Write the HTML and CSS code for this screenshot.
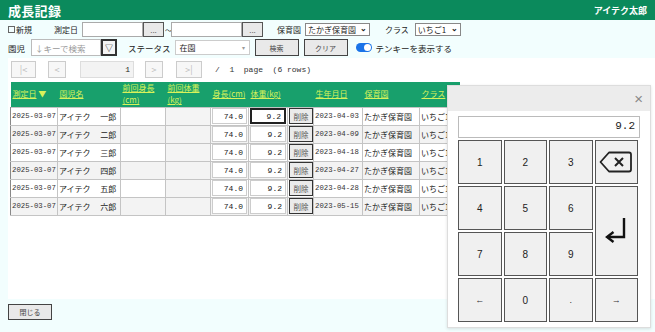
FILE: index.html
```html
<!DOCTYPE html>
<html lang="ja">
<head>
    <meta charset="UTF-8">
    <meta name="viewport" content="width=device-width, initial-scale=1.0">
    <title>成長記録</title>
    <link rel="stylesheet" href="styles.css">
</head>
<body>
    <header class="topbar">
        <h1>成長記録</h1>
        <span class="user">アイテク太郎</span>
    </header>

    <div class="filters">
        <div class="frow row1">
            <label class="chk"><span class="box"></span>新規</label>
            <span class="lbl lbl-date">測定日</span>
            <span class="date-box"><input type="text" class="date-in"><button class="dots">...</button></span>
            <span class="tilde">〜</span>
            <span class="date-box date-box2"><input type="text" class="date-in date-in2"><button class="dots">...</button></span>
            <span class="lbl lbl-en">保育園</span>
            <span class="sel sel-en">たかぎ保育園<span class="chev">⌄</span></span>
            <span class="lbl lbl-cls">クラス</span>
            <span class="sel sel-cls">いちご1<span class="chev">⌄</span></span>
        </div>
        <div class="frow row2">
            <span class="lbl">園児</span>
            <span class="kid-box"><input type="text" class="kid-in" placeholder="↓キーで検索"><button class="tri">▽</button></span>
            <span class="lbl lbl-st">ステータス</span>
            <span class="status">在園<span class="caret">▾</span></span>
            <button class="btn btn-search">検索</button>
            <button class="btn btn-clear">クリア</button>
            <span class="toggle"><span class="knob"></span></span>
            <span class="lbl lbl-tenkey">テンキーを表示する</span>
        </div>
    </div>

    <main class="panel">
        <div class="pager">
            <button class="pg pg-first">|&lt;</button>
            <button class="pg pg-prev">&lt;</button>
            <input type="text" class="pg-in" value="1">
            <button class="pg pg-next">&gt;</button>
            <button class="pg pg-last">&gt;|</button>
            <span class="pg-info">/&nbsp;&nbsp;1&nbsp;&nbsp;page&nbsp;&nbsp;(6 rows)</span>
        </div>

        <table class="grid">
            <thead>
                <tr>
                    <th class="c-date"><a href="#">測定日</a>&nbsp;▼</th>
                    <th class="c-name"><a href="#">園児名</a></th>
                    <th class="c-prev"><a href="#">前回身長<br>(cm)</a></th>
                    <th class="c-prev"><a href="#">前回体重<br>(kg)</a></th>
                    <th class="c-num"><a href="#">身長(cm)</a></th>
                    <th class="c-num2"><a href="#">体重(kg)</a></th>
                    <th class="c-del"></th>
                    <th class="c-birth"><a href="#">生年月日</a></th>
                    <th class="c-en"><a href="#">保育園</a></th>
                    <th class="c-cls"><a href="#">クラス</a></th>
                </tr>
            </thead>
            <tbody>
                <tr>
                    <td class="mono">2025-03-07</td><td>アイテク　 一郎</td><td></td><td class="gr"></td>
                    <td><input class="num" value="74.0"></td><td><input class="num focus" value="9.2"></td>
                    <td><button class="del">削除</button></td><td class="mono">2023-04-03</td><td>たかぎ保育園</td><td>いちご1</td>
                </tr>
                <tr>
                    <td class="mono">2025-03-07</td><td>アイテク　 二郎</td><td></td><td class="gr"></td>
                    <td><input class="num" value="74.0"></td><td><input class="num" value="9.2"></td>
                    <td><button class="del">削除</button></td><td class="mono">2023-04-09</td><td>たかぎ保育園</td><td>いちご1</td>
                </tr>
                <tr>
                    <td class="mono">2025-03-07</td><td>アイテク　 三郎</td><td></td><td class="gr"></td>
                    <td><input class="num" value="74.0"></td><td><input class="num" value="9.2"></td>
                    <td><button class="del">削除</button></td><td class="mono">2023-04-18</td><td>たかぎ保育園</td><td>いちご1</td>
                </tr>
                <tr>
                    <td class="mono">2025-03-07</td><td>アイテク　 四郎</td><td></td><td class="gr"></td>
                    <td><input class="num" value="74.0"></td><td><input class="num" value="9.2"></td>
                    <td><button class="del">削除</button></td><td class="mono">2023-04-27</td><td>たかぎ保育園</td><td>いちご1</td>
                </tr>
                <tr>
                    <td class="mono">2025-03-07</td><td>アイテク　 五郎</td><td></td><td class="gr"></td>
                    <td><input class="num" value="74.0"></td><td><input class="num" value="9.2"></td>
                    <td><button class="del">削除</button></td><td class="mono">2023-04-28</td><td>たかぎ保育園</td><td>いちご1</td>
                </tr>
                <tr>
                    <td class="mono">2025-03-07</td><td>アイテク　 六郎</td><td></td><td class="gr"></td>
                    <td><input class="num" value="74.0"></td><td><input class="num" value="9.2"></td>
                    <td><button class="del">削除</button></td><td class="mono">2023-05-15</td><td>たかぎ保育園</td><td>いちご1</td>
                </tr>
            </tbody>
        </table>
    </main>

    <div class="footer">
        <button class="btn btn-close">閉じる</button>
    </div>

    <div class="tenkey">
        <div class="tk-head"><span class="tk-x">×</span></div>
        <div class="tk-display">9.2</div>
        <div class="tk-keys">
            <button class="key">1</button>
            <button class="key">2</button>
            <button class="key">3</button>
            <button class="key">
                <svg width="34" height="22" viewBox="0 0 34 22"><path d="M10 1.5 H30 a2 2 0 0 1 2 2 V18.5 a2 2 0 0 1 -2 2 H10 L1.5 11 Z" fill="none" stroke="#222" stroke-width="1.8" stroke-linejoin="round"/><path d="M16 7 L24 15 M24 7 L16 15" stroke="#222" stroke-width="2"/></svg>
            </button>
            <button class="key">4</button>
            <button class="key">5</button>
            <button class="key">6</button>
            <button class="key key-enter">
                <svg width="24" height="30" viewBox="0 0 24 30"><path d="M20 2 V21 H5" fill="none" stroke="#111" stroke-width="2.4"/><path d="M9.5 16 L3 21 L9.5 26" fill="none" stroke="#111" stroke-width="2.4"/></svg>
            </button>
            <button class="key">7</button>
            <button class="key">8</button>
            <button class="key">9</button>
            <button class="key key-sm">←</button>
            <button class="key">0</button>
            <button class="key key-sm">.</button>
            <button class="key key-sm">→</button>
        </div>
    </div>
</body>
</html>
```

FILE: styles.css
```css
body {
    margin: 0;
    background-color: #f2fefe;
    font-family: "Noto Sans CJK JP", "Noto Sans", sans-serif;
    font-size: 8px;
    color: #222;
    position: relative;
    min-height: 332px;
}
button, input, select {
    font-family: inherit;
    font-size: inherit;
    color: inherit;
    margin: 0;
    box-sizing: border-box;
}

/* header bar */
.topbar {
    height: 20px;
    background-color: #0b8a5c;
    color: #fff;
    display: flex;
    align-items: center;
    justify-content: space-between;
    padding: 0 8px;
}
.topbar h1 {
    margin: 0;
    font-size: 13px;
    font-weight: bold;
    letter-spacing: 0.3px;
}
.user {
    font-size: 9px;
    font-weight: bold;
}

/* filters */
.filters {
    padding: 2px 0 0 8px;
}
.frow {
    display: flex;
    align-items: center;
    white-space: nowrap;
}
.row1 {
    height: 15px;
}
.row2 {
    height: 17px;
    margin-top: 2px;
    font-size: 8.5px;
}
.chk {
    display: flex;
    align-items: center;
}
.box {
    width: 5px;
    height: 5px;
    border: 1px solid #666;
    margin-right: 1px;
}
.lbl-date { margin-left: 22px; }
.date-box {
    display: flex;
    margin-left: 4px;
}
.date-box2 { margin-left: 0; }
.date-in {
    width: 61px;
    height: 15px;
    border: 1px solid #aaa;
    background: #fff;
}
.date-in2 { width: 71px; }
.dots {
    width: 21px;
    height: 15px;
    border: 1px solid #555;
    background: #e8e8e8;
    color: #666;
    padding: 0;
    line-height: 10px;
}
.tilde {
    margin-left: 1px;
    width: 6px;
    overflow: hidden;
    font-size: 7px;
}
.lbl-en { margin-left: 14px; }
.sel {
    height: 13px;
    box-sizing: border-box;
    border: 1px solid #888;
    background: #fff;
    padding: 0 2px;
    font-size: 8px;
    margin-left: 4px;
    display: flex;
    align-items: center;
    justify-content: space-between;
}
.chev {
    font-size: 8px;
    line-height: 8px;
    margin-top: -4px;
    font-weight: bold;
}
.sel-en { width: 65px; }
.lbl-cls { margin-left: 15px; }
.sel-cls { width: 46px; margin-left: 6px; }

.kid-box {
    display: flex;
    margin-left: 6px;
}
.kid-in {
    width: 70px;
    height: 17px;
    border: 1px solid #bbb;
    background: #fff;
    padding: 0 3px;
}
.kid-in::placeholder { color: #999; }
.tri {
    width: 16px;
    height: 17px;
    border: 2px solid #333;
    background: #f4f4f4;
    padding: 0;
    font-size: 8px;
}
.lbl-st { margin-left: 11px; }
.status {
    width: 75px;
    height: 15px;
    box-sizing: border-box;
    margin-left: 4px;
    border: 1px solid #ccc;
    background: #fff;
    display: flex;
    align-items: center;
    justify-content: space-between;
    padding: 0 4px;
    font-size: 8px;
}
.caret { color: #999; font-size: 6px; }
.btn {
    height: 17px;
    border: 1px solid #444;
    background: #e9e9e9;
    padding: 0;
    font-size: 7px;
    color: #444;
}
.btn-search { width: 44px; margin-left: 5px; }
.btn-clear { width: 44px; margin-left: 5px; }
.toggle {
    width: 16px;
    height: 9px;
    border-radius: 5px;
    background: #1a73e8;
    margin-left: 8px;
    position: relative;
}
.knob {
    position: absolute;
    right: 1px;
    top: 1px;
    width: 7px;
    height: 7px;
    border-radius: 50%;
    background: #fff;
}
.lbl-tenkey { margin-left: 4px; }

/* white panel */
.panel {
    background: #fff;
    margin: 2px 0 0 8px;
    padding: 3px 0 0 2px;
    height: 241px;
    box-sizing: border-box;
    overflow: hidden;
}
.pager {
    display: flex;
    align-items: center;
    height: 17px;
}
.pg {
    height: 17px;
    border: 1px solid #ccc;
    background: #f7f7f7;
    color: #bbb;
    padding: 0;
    font-size: 9px;
}
.pg-first { width: 25px; margin-left: 1px; }
.pg-prev { width: 18px; margin-left: 12px; }
.pg-in {
    width: 54px;
    height: 17px;
    margin-left: 14px;
    border: 1px solid #ddd;
    background: #f3f3f3;
    text-align: right;
    padding: 0 3px;
    font-family: "Liberation Mono", monospace;
    font-size: 8px;
}
.pg-next { width: 18px; margin-left: 11px; }
.pg-last { width: 26px; margin-left: 13px; }
.pg-info {
    margin-left: 13px;
    font-family: "Liberation Mono", monospace;
    font-size: 8px;
    color: #333;
}

/* data grid */
.grid {
    margin-top: 4px;
    border-collapse: collapse;
    table-layout: fixed;
    width: 449px;
}
.grid th {
    box-sizing: border-box;
    height: 25px;
    background: #18a06c;
    text-align: left;
    vertical-align: middle;
    padding: 0 2px;
    font-weight: normal;
    color: #d9f25a;
    line-height: 12px;
    font-size: 8px;
    white-space: nowrap;
}
.grid th a {
    color: #d9f25a;
    text-decoration: underline;
}
.c-date { width: 47px; }
.c-name { width: 63px; }
.c-prev { width: 45px; }
.c-num { width: 38px; }
.c-num2 { width: 39px; }
.c-del { width: 26px; }
.c-birth { width: 49px; }
.c-en { width: 57px; }
.c-cls { width: 40px; }
.grid td {
    height: 18px;
    padding: 0 1px;
    border: 1px solid #c4c4c4;
    box-sizing: border-box;
    white-space: nowrap;
    overflow: hidden;
    font-size: 8px;
}
.grid tbody tr:nth-child(even) td { background: #f3f3f3; }
.grid td.gr { background: #f4f4f4; }
.grid tbody td:first-child { border-left: 1px solid #888; }
.mono {
    font-family: "Liberation Mono", monospace;
    font-size: 7.3px !important;
    color: #333;
}
.num {
    width: 100%;
    height: 16px;
    border: 1px solid #ccc;
    background: #fff;
    text-align: right;
    padding: 0 3px;
    font-family: "Liberation Mono", monospace;
    font-size: 8px;
    display: block;
}
.num.focus { border: 2px solid #222; }
.del {
    width: 24px;
    height: 16px;
    border: 1px solid #333;
    background: #ebebeb;
    color: #555;
    padding: 0;
    font-size: 7.5px;
    display: block;
}

.footer {
    padding: 5px 0 0 8px;
}
.btn-close { width: 44px; height: 16px; }

/* floating ten key pad */
.tenkey {
    position: absolute;
    left: 447px;
    top: 85px;
    width: 204px;
    height: 243px;
    background: #fff;
    border: 1px solid #ddd;
    box-shadow: 0 1px 3px rgba(0,0,0,0.12);
    box-sizing: border-box;
}
.tk-head {
    height: 25px;
    background: #ececec;
    display: flex;
    align-items: center;
    justify-content: flex-end;
    padding-right: 7px;
}
.tk-x {
    color: #888;
    font-family: "Liberation Sans", sans-serif;
    font-size: 15px;
}
.tk-display {
    margin: 5px 0 0 10px;
    width: 182px;
    height: 22px;
    box-sizing: border-box;
    border: 1px solid #bbb;
    text-align: right;
    padding: 3px 4px 0 0;
    font-family: "Liberation Mono", monospace;
    font-size: 11px;
    color: #222;
}
.tk-keys {
    margin: 2px 0 0 10px;
    display: grid;
    grid-template-columns: repeat(4, 43.5px);
    grid-template-rows: repeat(4, 44px);
    gap: 2px;
}
.key {
    border: 1px solid #555;
    background: #f0f0f0;
    font-family: "Liberation Sans", sans-serif;
    font-size: 10px;
    color: #222;
    padding: 0;
    display: flex;
    align-items: center;
    justify-content: center;
}
.key-sm { font-size: 9px; color: #333; }
.key-enter { grid-column: 4; grid-row: 2 / span 2; }
```
